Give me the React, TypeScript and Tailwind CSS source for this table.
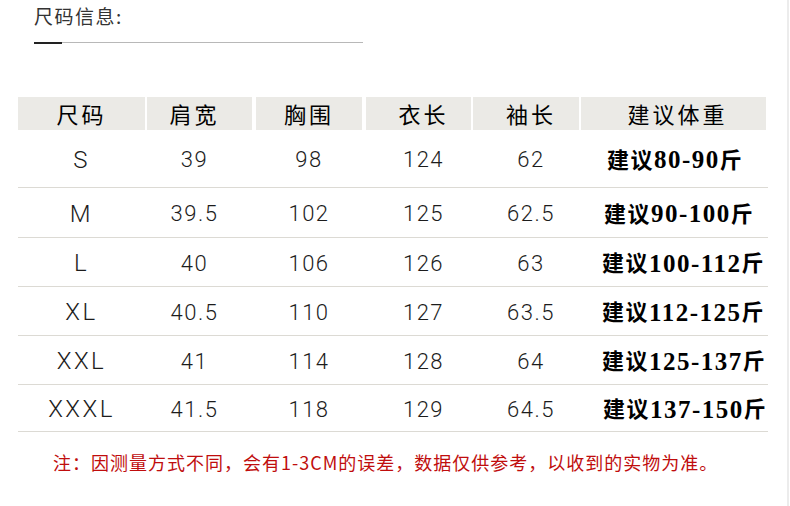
import React from "react";

const rows = [
  ["S", "39", "98", "124", "62", "80-90"],
  ["M", "39.5", "102", "125", "62.5", "90-100"],
  ["L", "40", "106", "126", "63", "100-112"],
  ["XL", "40.5", "110", "127", "63.5", "112-125"],
  ["XXL", "41", "114", "128", "64", "125-137"],
  ["XXXL", "41.5", "118", "129", "64.5", "137-150"],
];

const heads = ["尺码", "肩宽", "胸围", "衣长", "袖长", "建议体重"];

// widths & left margins of the six columns
const colCls = [
  "w-[127px]",
  "w-[105px] ml-[2px]",
  "w-[106px] ml-[4px]",
  "w-[105px] ml-[4px]",
  "w-[106px] ml-[2px]",
  "w-[185px] ml-[2px]",
];
const textShift = ["", "pr-[10px]", "", "pl-[10px]", "pl-[10px]", "pl-[8px]"];
const rowH = ["h-[57px]", "h-[49px]", "h-[48px]", "h-[48px]", "h-[48px]", "h-[46px]"];
const weightPad = ["pl-[26px]", "pl-[23px]", "pl-[21px]", "pl-[21px]", "pl-[21px]", "pl-[22px]"];

const serif = '"Liberation Serif", "Noto Sans CJK SC", serif';
const sans = '"Noto Sans CJK SC", sans-serif';

export default function App() {
  return (
    <div className="w-[790px] h-[506px] bg-white flex flex-row overflow-hidden">
      <div className="flex-1 flex flex-col pl-[18px]">
        <div
          className="ml-[16px] pt-[3px] text-[19px] leading-[25px] tracking-[1.5px] text-[#333]"
          style={{ fontFamily: sans }}
        >
          尺码信息:
        </div>
        <div className="ml-[16px] mt-[13px] flex items-center h-[3px] w-[329px]">
          <div className="w-[28px] h-[2px] bg-[#222]" />
          <div className="flex-1 h-px bg-[#b8b8b8]" />
        </div>
        <div className="mt-[53px] flex flex-col w-[750px]">
          <div className="flex h-[33px]">
            {heads.map((h, i) => (
              <div
                key={h}
                className={`${colCls[i]} h-full bg-[#ebeae6] flex items-center justify-center text-[22px] tracking-[3px] text-black ${textShift[i]}`}
                style={{ fontFamily: sans }}
              >
                {h}
              </div>
            ))}
          </div>
          {rows.map((r, ri) => (
            <div key={r[0]} className="flex border-b border-[#dcdad4]">
              {r.map((c, ci) =>
                ci === 5 ? (
                  <div
                    key={ci}
                    className={`${colCls[ci]} ${rowH[ri]} ${weightPad[ri]} pt-[3px] flex items-center justify-start whitespace-nowrap font-bold text-black tracking-[1.5px]`}
                    style={{ fontFamily: serif }}
                  >
                    <span className="text-[22px]">建议</span>
                    <span className="text-[25px]">{c}</span>
                    <span className="text-[22px]">斤</span>
                  </div>
                ) : (
                  <div
                    key={ci}
                    className={`${colCls[ci]} ${rowH[ri]} pt-[2px] flex items-center justify-center whitespace-nowrap ${textShift[ci]} ${
                      ci === 0
                        ? "text-[24px] font-light tracking-[2.5px] text-[#1c1c1c]"
                        : "text-[22px] font-light tracking-[1.5px] text-[#1c1c1c]"
                    }`}
                    style={{ fontFamily: 'Roboto, "Noto Sans", sans-serif' }}
                  >
                    {c}
                  </div>
                )
              )}
            </div>
          ))}
        </div>
        <div
          className="ml-[35px] mt-[18px] text-[18px] leading-[24px] tracking-[1px] text-[#c00d0d] whitespace-nowrap"
          style={{ fontFamily: sans }}
        >
          注：因测量方式不同，会有1-3CM的误差，数据仅供参考，以收到的实物为准。
        </div>
      </div>
      <div className="w-[2px] h-full bg-[#ececec]" />
      <div className="w-px h-full bg-white" />
    </div>
  );
}
